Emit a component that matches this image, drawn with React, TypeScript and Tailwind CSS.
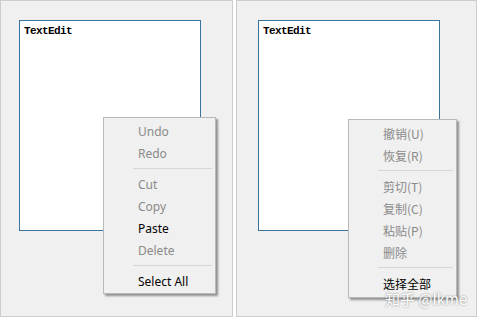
import React from "react";

type Item = { label: string; enabled?: boolean } | "sep";

const englishMenu: Item[] = [
  { label: "Undo" },
  { label: "Redo" },
  "sep",
  { label: "Cut" },
  { label: "Copy" },
  { label: "Paste", enabled: true },
  { label: "Delete" },
  "sep",
  { label: "Select All", enabled: true },
];

const chineseMenu: Item[] = [
  { label: "撤销(U)" },
  { label: "恢复(R)" },
  "sep",
  { label: "剪切(T)" },
  { label: "复制(C)" },
  { label: "粘贴(P)" },
  { label: "删除" },
  "sep",
  { label: "选择全部", enabled: true },
];

function ContextMenu({ items, className }: { items: Item[]; className: string }) {
  return (
    <div
      className={`absolute flex flex-col border border-[#b9b9b9] bg-[#f0f0f0] pt-[3px] shadow-[2px_2px_2px_rgba(0,0,0,0.4)] ${className}`}
    >
      {items.map((item, i) =>
        item === "sep" ? (
          <div key={i} className="ml-[29px] mr-[3px] mb-[5px] mt-[3px] h-px bg-[#d7d7d7]" />
        ) : (
          <div
            key={i}
            className={`flex h-[22px] items-center pl-[34px] text-[12px] leading-none ${
              item.enabled ? "text-black" : "text-[#8a8a8a]"
            }`}
          >
            {item.label}
          </div>
        )
      )}
    </div>
  );
}

function Panel({ children, boxOffset, width }: { children: React.ReactNode; boxOffset: string; width: string }) {
  return (
    <div className={`relative flex h-[317px] flex-col border border-[#cdcdcd] bg-[#f0f0f0] pt-[19px] ${width}`}>
      {/* text edit box */}
      <div className={`flex h-[211px] w-[182px] flex-col border border-[#3a749e] bg-white px-[4px] pt-[5px] ${boxOffset}`}>
        <div className="font-['Liberation_Mono',monospace] text-[11px] font-bold leading-[11px] tracking-[-0.6px] text-black">
          TextEdit
        </div>
      </div>
      {children}
    </div>
  );
}

export default function App() {
  return (
    <div className="flex h-[318px] w-[478px] gap-[3px] overflow-hidden bg-white font-['Noto_Sans','Noto_Sans_CJK_SC',sans-serif]">
      <Panel width="w-[233px]" boxOffset="ml-[18px]">
        <ContextMenu items={englishMenu} className="left-[102px] top-[116px] w-[113px] pb-0" />
      </Panel>
      <Panel width="w-[241px]" boxOffset="ml-[21px]">
        <ContextMenu
          items={chineseMenu}
          className="left-[111px] top-[118px] w-[109px] pb-[2px] font-['Noto_Sans_CJK_SC',sans-serif]"
        />
        {/* watermark */}
        <div className="absolute left-[148px] top-[290px] font-['Noto_Sans_CJK_SC',sans-serif] text-[15px] leading-none text-white [text-shadow:0_0_2px_rgba(0,0,0,0.5)]">
          知乎 @lkme
        </div>
      </Panel>
    </div>
  );
}
